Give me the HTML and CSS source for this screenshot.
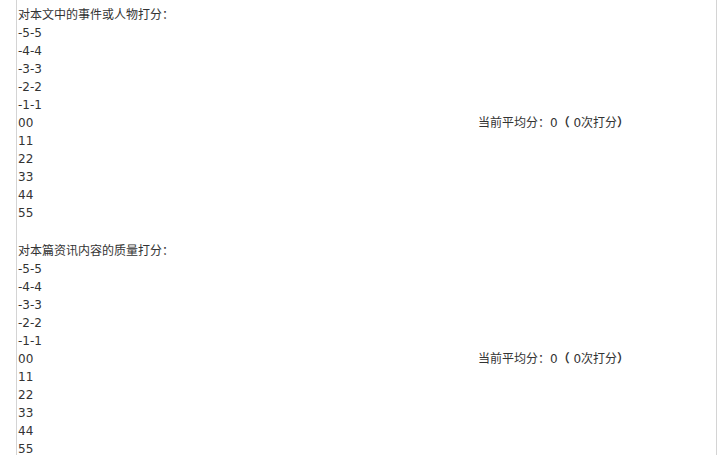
FILE: index.html
```
<!doctype html>
<html>
	<head>
		<meta charset="utf-8">
		<link rel="stylesheet" href="styles.css">
	</head>
	<body>
		<div class="page">
			<div class="vote">
				<div class="vote-title">对本文中的事件或人物打分：</div>
				<table class="vote-table">
					<tr>
						<td class="vote-options">
							<div>-5-5</div>
							<div>-4-4</div>
							<div>-3-3</div>
							<div>-2-2</div>
							<div>-1-1</div>
							<div>00</div>
							<div>11</div>
							<div>22</div>
							<div>33</div>
							<div>44</div>
							<div>55</div>
						</td>
						<td class="vote-average">当前平均分：0<span class="paren">（</span> 0次打分<span class="paren">）</span></td>
					</tr>
				</table>
			</div>
			<div class="vote">
				<div class="vote-title">对本篇资讯内容的质量打分：</div>
				<table class="vote-table">
					<tr>
						<td class="vote-options">
							<div>-5-5</div>
							<div>-4-4</div>
							<div>-3-3</div>
							<div>-2-2</div>
							<div>-1-1</div>
							<div>00</div>
							<div>11</div>
							<div>22</div>
							<div>33</div>
							<div>44</div>
							<div>55</div>
						</td>
						<td class="vote-average">当前平均分：0<span class="paren">（</span> 0次打分<span class="paren">）</span></td>
					</tr>
				</table>
			</div>
		</div>
	</body>
</html>
```
FILE: styles.css
```
body
{
	margin: 0;
	background-color: #ffffff;
	color: #333333;
	font-family: "DejaVu Sans", Verdana, "Noto Sans CJK SC", sans-serif;
	font-size: 12px;
	line-height: 18px;
}

.page
{
	margin-left: 16px;
	width: 699px;
	min-height: 455px;
	border-left: 1px solid #d4d4d4;
	border-right: 1px solid #d4d4d4;
	padding-top: 6px;
}

.vote
{
	margin-bottom: 20px;
}

.vote-title
{
	padding-left: 1px;
}

.vote-table
{
	width: 100%;
	border-collapse: collapse;
}

.vote-table td
{
	padding: 0;
}

.vote-options
{
	width: 460px;
	padding-left: 1px !important;
}

.vote-average
{
	vertical-align: middle;
	white-space: nowrap;
}

.paren
{
	font-weight: bold;
}
```
